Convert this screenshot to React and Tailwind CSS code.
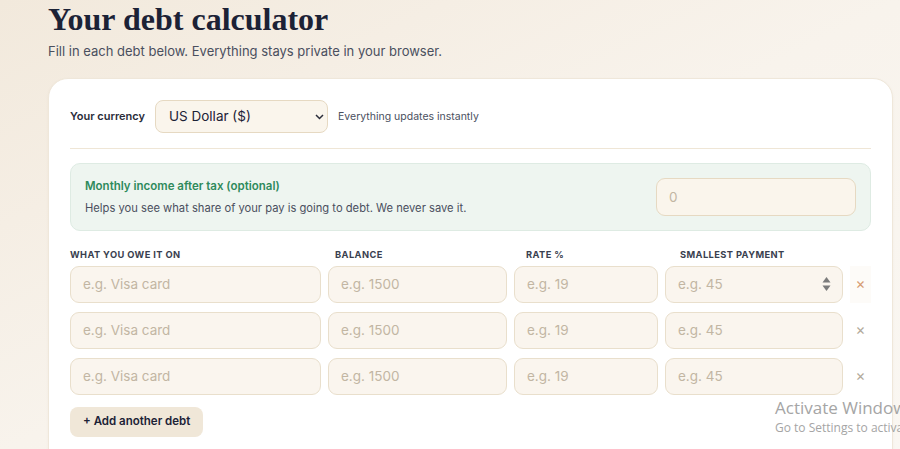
import React from 'react';

const rows = [0, 1, 2];

const inputCls =
    'h-[37px] w-full rounded-[9px] border border-[#e9dfcc] bg-[#faf5ee] px-3 text-[13.5px] text-[#2a2d3a] placeholder:text-[#c2b6a3] outline-none';

const Spinner = () => (
    <svg width="9" height="16" viewBox="0 0 9 16" className="absolute right-[12px] top-[10px]">
        <path d="M4.5 1 L8.5 6.5 L0.5 6.5 Z" fill="#7b7b7b" />
        <path d="M4.5 15 L8.5 9.5 L0.5 9.5 Z" fill="#7b7b7b" />
    </svg>
);

const App = () => {
    return (
        <div
            className="relative min-h-[449px] w-full overflow-hidden bg-gradient-to-br from-[#f2e9dc] via-[#f8f3ec] to-[#faf7f2] pl-[48px] pr-[7px]"
            style={{ fontFamily: 'Inter, "Liberation Sans", sans-serif' }}
        >
            {/* Header */}
            <h1
                className="pt-[1px] text-[32px] font-bold leading-[36px] text-[#1c2236]"
                style={{ fontFamily: '"Liberation Serif", "DejaVu Serif", serif' }}
            >
                Your debt calculator
            </h1>
            <p className="mt-[4px] text-[13px] leading-[20px] text-[#4a4f5e]">
                Fill in each debt below. Everything stays private in your browser.
            </p>

            {/* Card */}
            <div className="mt-[17px] rounded-t-[20px] border border-[#efe7da] bg-white px-[21px] pb-[14px] pt-[21px] shadow-[0_1px_3px_rgba(120,90,40,0.05)]">
                <div className="flex items-center gap-[10px]">
                    <span className="text-[11px] font-semibold text-[#2a2d3a]">Your currency</span>
                    <div className="relative">
                        <select className="h-[33px] w-[173px] appearance-none rounded-[8px] border border-[#e6d9c2] bg-[#faf5ec] pl-[13px] text-[13.5px] text-[#1c2236] outline-none">
                            <option>US Dollar ($)</option>
                        </select>
                        <svg width="9" height="6" viewBox="0 0 9 6" className="pointer-events-none absolute right-[4px] top-[14px]">
                            <path d="M1 1 L4.5 4.5 L8 1" fill="none" stroke="#2a2d3a" strokeWidth="1.5" />
                        </svg>
                    </div>
                    <span className="text-[10.5px] text-[#4a4f5e]">Everything updates instantly</span>
                </div>

                <div className="mt-[15px] border-t border-[#efe6d6]" />

                {/* Income box */}
                <div className="mt-[14px] flex items-center justify-between rounded-[10px] border border-[#deebe3] bg-[#eef5f0] py-[14px] pl-[14px] pr-[14px]">
                    <div>
                        <div className="text-[11.5px] font-semibold leading-[16px] text-[#2e8a5c]">
                            Monthly income after tax (optional)
                        </div>
                        <div className="mt-[6px] text-[11.2px] leading-[16px] text-[#4a4f5e]">
                            Helps you see what share of your pay is going to debt. We never save it.
                        </div>
                    </div>
                    <input
                        className="h-[38px] w-[200px] rounded-[9px] border border-[#e6d9c2] bg-[#faf5ec] px-3 text-[13.5px] placeholder:text-[#c2b6a3] outline-none"
                        placeholder="0"
                    />
                </div>

                {/* Debt table */}
                <div className="mt-[17px] grid grid-cols-[251px_179px_144px_178px_1fr] gap-x-[7px] text-[9.3px] font-bold uppercase tracking-[0.4px] text-[#3a3f4f]">
                    <div>What you owe it on</div>
                    <div className="pl-[7px]">Balance</div>
                    <div className="pl-[12px]">Rate %</div>
                    <div className="pl-[15px]">Smallest payment</div>
                    <div />
                </div>

                <div className="mt-[4px] flex flex-col gap-[9px]">
                    {rows.map((r) => (
                        <div key={r} className="grid grid-cols-[251px_179px_144px_178px_1fr] items-center gap-x-[7px]">
                            <input className={inputCls} placeholder="e.g. Visa card" />
                            <input className={inputCls} placeholder="e.g. 1500" />
                            <input className={inputCls} placeholder="e.g. 19" />
                            <div className="relative">
                                <input className={inputCls} placeholder="e.g. 45" />
                                {r === 0 && <Spinner />}
                            </div>
                            <button
                                className={
                                    'flex h-[37px] items-center justify-center text-[15px] ' +
                                    (r === 0 ? 'bg-[#fdfbf8] text-[#d79c74]' : 'text-[#b3aa9c]')
                                }
                            >
                                ×
                            </button>
                        </div>
                    ))}
                </div>

                <button className="mt-[12px] h-[30px] rounded-[8px] bg-[#f0e7d8] px-[13px] text-[11.5px] font-semibold text-[#1c2236]">
                    + Add another debt
                </button>
            </div>

            {/* Windows watermark overlay */}
            <div
                className="pointer-events-none absolute left-[775px] top-[397px] whitespace-nowrap text-[#a5a5a5]"
                style={{ fontFamily: '"Open Sans", "Liberation Sans", sans-serif' }}
            >
                <div className="text-[17px] leading-[22px]">Activate Windows</div>
                <div className="mt-[1px] text-[12px] leading-[16px]">Go to Settings to activate Windows.</div>
            </div>
        </div>
    );
};

export default App;
